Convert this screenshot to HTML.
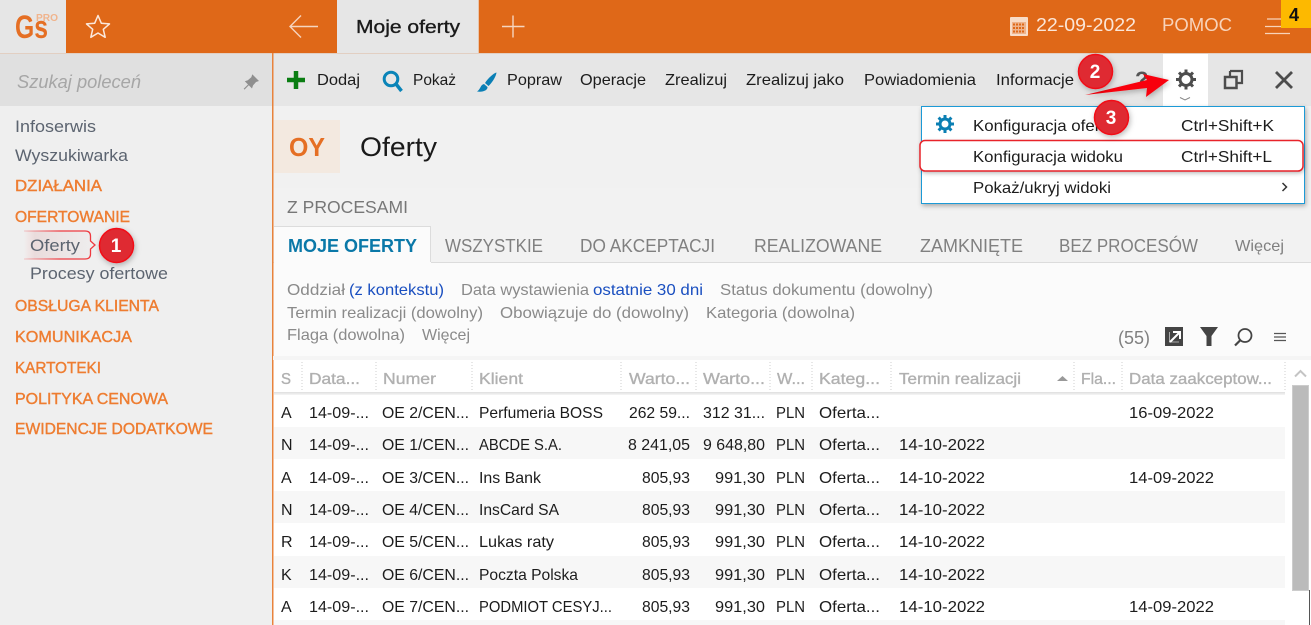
<!DOCTYPE html>
<html><head><meta charset="utf-8"><style>
html,body{margin:0;padding:0;width:1311px;height:625px;overflow:hidden;background:#fff}
svg{display:block}
text{font-family:"Liberation Sans",sans-serif;font-size:16px;fill:#1c1c1c}
.t{font-size:16px;fill:#1c1c1c}
.s{fill:#5c6470;font-size:16.5px}
.o{fill:#ee7d31;font-size:15.5px;stroke:#ee7d31;stroke-width:.4px}
.tab{fill:#808080;font-size:18px}
.f{fill:#8a8a8a;font-size:16px}
.b{fill:#1a4fc0;font-size:16px}
.h{fill:#b0b0b0;font-size:16px;stroke:#b0b0b0;stroke-width:.35px}
.bn{fill:#fff;font-weight:bold;font-size:19px;text-anchor:middle}
</style></head><body>
<svg width="1311" height="625" viewBox="0 0 1311 625" xmlns="http://www.w3.org/2000/svg">
<defs>
<filter id="sh" x="-30%" y="-30%" width="160%" height="160%"><feDropShadow dx="1" dy="2" stdDeviation="3" flood-color="#000" flood-opacity=".28"/></filter>
<filter id="sh2" x="-5%" y="-20%" width="110%" height="140%"><feDropShadow dx="1" dy="2" stdDeviation="2.5" flood-color="#000" flood-opacity=".3"/></filter>
<linearGradient id="fade" x1="0" x2="1"><stop offset="0" stop-color="#f3dada" stop-opacity="0"/><stop offset=".15" stop-color="#eadcdc"/><stop offset="1" stop-color="#eee"/></linearGradient>
<linearGradient id="fs" gradientUnits="userSpaceOnUse" x1="22" y1="0" x2="60" y2="0"><stop offset="0" stop-color="#ee3a40" stop-opacity=".15"/><stop offset="1" stop-color="#ee3a40"/></linearGradient>
<linearGradient id="hs" x1="0" x2="0" y1="0" y2="1"><stop offset="0" stop-color="#dedede"/><stop offset="1" stop-color="#f6f6f6"/></linearGradient>
</defs>
<!-- backgrounds -->
<rect width="1311" height="625" fill="#fbfbfb"/>
<rect y="0" width="1311" height="53" fill="#df6818"/>
<rect width="66" height="53" fill="#e6e6e6"/>
<rect x="337" width="141" height="53" fill="#e6e6e6"/>
<rect x="478" width="1" height="53" fill="#e8c4aa"/>
<rect y="53" width="272" height="572" fill="#efefef"/>
<rect y="53" width="272" height="53" fill="#e0e0e0"/>
<rect x="273" y="53" width="1038" height="53" fill="#e6e6e6"/>
<rect y="53" width="1311" height="1" fill="#e2cfc2"/>
<rect x="1163" y="54" width="45" height="52" fill="#fff"/>
<rect x="273" y="106" width="1038" height="82" fill="#f1f1f1"/>
<rect x="273" y="188" width="1038" height="38" fill="#f2f2f2"/>
<rect x="273" y="226" width="1038" height="36" fill="#f2f2f2"/>
<rect x="273" y="262" width="1038" height="1" fill="#dcdcdc"/>
<rect x="274" y="226" width="157" height="37" fill="#fbfbfb"/>
<path d="M274 226.500H430.500V262" fill="none" stroke="#dcdcdc"/>
<rect x="272" y="53" width="1.500" height="572" fill="#e8833c"/>
<!-- header -->
<text x="15" y="38" font-weight="bold" style="font-size:32px;fill:#e56f24" textLength="33" lengthAdjust="spacingAndGlyphs">Gs</text>
<text x="36" y="21" font-weight="bold" style="font-size:10.500px;fill:#f0b48d" textLength="22" lengthAdjust="spacingAndGlyphs">PRO</text>
<path d="M98 15.500l3.300 7.700 8.200.7-6.200 5.400 1.900 8-7.200-4.300-7.200 4.300 1.900-8-6.200-5.400 8.200-.7z" fill="none" stroke="#fbe8dc" stroke-width="1.500" stroke-linejoin="round"/>
<path d="M318 26.500H290M301 15.500L290 26.500L301 37.500" fill="none" stroke="#f6d5bf" stroke-width="1.400"/>
<text x="356" y="33" style="font-size:18.500px;fill:#1a1a1a;stroke:#1a1a1a;stroke-width:.35px" textLength="104" lengthAdjust="spacingAndGlyphs">Moje oferty</text>
<path d="M502 26.500H524.500M513 15.500V37.500" stroke="#f6d5bf" stroke-width="1.400"/>
<rect x="1010" y="17" width="18" height="19" rx="1" fill="#f8dcc8"/>
<rect x="1012" y="22" width="14" height="12" fill="#eeb38c"/>
<path d="M1013 23.500h2v2h-2zM1016 23.500h2v2h-2zM1019 23.500h2v2h-2zM1022 23.500h2v2h-2zM1013 27h2v2h-2zM1016 27h2v2h-2zM1019 27h2v2h-2zM1022 27h2v2h-2zM1013 30.500h2v2h-2zM1016 30.500h2v2h-2zM1019 30.500h2v2h-2zM1022 30.500h2v2h-2z" fill="#df6818"/>
<text x="1036" y="31" style="font-size:18px;fill:#fbe6d8" textLength="100" lengthAdjust="spacingAndGlyphs">22-09-2022</text>
<text x="1162" y="31" style="font-size:18px;fill:#f8d3ba" textLength="70" lengthAdjust="spacingAndGlyphs">POMOC</text>
<path d="M1267 19H1290M1265 26.500H1290M1265 33.500H1290" stroke="#f8d3ba" stroke-width="1.300"/>
<rect x="1281" y="0" width="30" height="28" fill="#fdb900"/>
<text x="1289" y="21" font-weight="bold" style="font-size:18px;fill:#111">4</text>
<!-- search -->
<text x="17" y="88" font-style="italic" style="font-size:18px;fill:#a6a6a6" textLength="124" lengthAdjust="spacingAndGlyphs">Szukaj poleceń</text>
<path d="M252 74l7 7-3 1-3 3.500-1 3-3.200-3.200-4.300 4.300-.8-.8 4.300-4.300-3.200-3.200 3-1 3.500-3 1-3z" fill="#8f8f8f"/>
<!-- sidebar -->
<text x="15" y="132" class="s" textLength="81" lengthAdjust="spacingAndGlyphs">Infoserwis</text>
<text x="15" y="161" class="s" textLength="113" lengthAdjust="spacingAndGlyphs">Wyszukiwarka</text>
<text x="15" y="191" class="o" textLength="87" lengthAdjust="spacingAndGlyphs">DZIAŁANIA</text>
<text x="15" y="222" class="o" textLength="115" lengthAdjust="spacingAndGlyphs">OFERTOWANIE</text>
<path d="M24 231H85Q90.500 231 90.500 236V241L95 245L90.500 249V254Q90.500 259 85 259H24Z" fill="url(#fade)"/>
<path d="M24 231H85Q90.500 231 90.500 236V241L95 245L90.500 249V254Q90.500 259 85 259H24" fill="none" stroke="url(#fs)" stroke-width="1.300"/>
<text x="30" y="251" class="s" textLength="50" lengthAdjust="spacingAndGlyphs">Oferty</text>
<text x="30" y="279" class="s" textLength="138" lengthAdjust="spacingAndGlyphs">Procesy ofertowe</text>
<text x="15" y="311" class="o" textLength="144" lengthAdjust="spacingAndGlyphs">OBSŁUGA KLIENTA</text>
<text x="15" y="342" class="o" textLength="117" lengthAdjust="spacingAndGlyphs">KOMUNIKACJA</text>
<text x="15" y="373" class="o" textLength="86" lengthAdjust="spacingAndGlyphs">KARTOTEKI</text>
<text x="15" y="404" class="o" textLength="153" lengthAdjust="spacingAndGlyphs">POLITYKA CENOWA</text>
<text x="15" y="434" class="o" textLength="198" lengthAdjust="spacingAndGlyphs">EWIDENCJE DODATKOWE</text>
<!-- toolbar -->
<path d="M287 80H305M296 71V89" stroke="#0a7d12" stroke-width="4.500"/>
<circle cx="391" cy="79" r="6.800" fill="none" stroke="#0a84b8" stroke-width="3"/>
<path d="M396 84L401.500 91" stroke="#0a84b8" stroke-width="3.500"/>
<path d="M496.500 72.500C494 73 488 78 485 83L488.500 86C491 84 496 77 496.500 72.500Z" fill="#0a7fb5"/>
<path d="M484 84C480 85 481 89 477 91.500C483 92.500 488 90 487.500 87Z" fill="#0a7fb5"/>
<text x="317" y="85" class="t" textLength="43" lengthAdjust="spacingAndGlyphs">Dodaj</text>
<text x="413" y="85" class="t" textLength="43" lengthAdjust="spacingAndGlyphs">Pokaż</text>
<text x="507" y="85" class="t" textLength="55" lengthAdjust="spacingAndGlyphs">Popraw</text>
<text x="580" y="85" class="t" textLength="66" lengthAdjust="spacingAndGlyphs">Operacje</text>
<text x="665" y="85" class="t" textLength="62" lengthAdjust="spacingAndGlyphs">Zrealizuj</text>
<text x="746" y="85" class="t" textLength="98" lengthAdjust="spacingAndGlyphs">Zrealizuj jako</text>
<text x="864" y="85" class="t" textLength="112" lengthAdjust="spacingAndGlyphs">Powiadomienia</text>
<text x="996" y="85" class="t" textLength="78" lengthAdjust="spacingAndGlyphs">Informacje</text>
<text x="1135" y="87" font-weight="bold" style="font-size:22px;fill:#555">?</text>
<!-- gear -->
<g fill="none" stroke="#4d4d4d">
<circle cx="1186" cy="79.500" r="6" stroke-width="3"/>
<path d="M1186 69.500V73M1186 86V89.500M1176 79.500H1179.500M1192.500 79.500H1196M1179 72.500L1181.300 74.800M1190.700 84.200L1193 86.500M1179 86.500L1181.300 84.200M1190.700 74.800L1193 72.500" stroke-width="3"/>
</g>
<path d="M1180 97.500L1185 100L1190 97.500" fill="none" stroke="#888"/>
<path d="M1230 71H1242V83H1236.500M1230 71V77" fill="none" stroke="#4d4d4d" stroke-width="2.200"/>
<rect x="1225" y="77" width="11.500" height="11" fill="none" stroke="#4d4d4d" stroke-width="2.500"/>
<path d="M1276 72L1292 88M1292 72L1276 88" stroke="#4d4d4d" stroke-width="2.800"/>
<!-- title -->
<rect x="274" y="120" width="66" height="53" fill="#f3e9e0"/>
<text x="289" y="156" font-weight="bold" style="font-size:26px;fill:#e56f24" textLength="36" lengthAdjust="spacingAndGlyphs">OY</text>
<text x="360" y="156" style="font-size:27px;fill:#1a1a1a" textLength="77" lengthAdjust="spacingAndGlyphs">Oferty</text>
<text x="287" y="213" style="font-size:17.500px;fill:#777" textLength="121" lengthAdjust="spacingAndGlyphs">Z PROCESAMI</text>
<!-- tabs -->
<text x="288" y="252" font-weight="bold" style="font-size:18px;fill:#0a78a8" textLength="129" lengthAdjust="spacingAndGlyphs">MOJE OFERTY</text>
<text x="445" y="252" class="tab" textLength="98" lengthAdjust="spacingAndGlyphs">WSZYSTKIE</text>
<text x="580" y="252" class="tab" textLength="135" lengthAdjust="spacingAndGlyphs">DO AKCEPTACJI</text>
<text x="754" y="252" class="tab" textLength="128" lengthAdjust="spacingAndGlyphs">REALIZOWANE</text>
<text x="920" y="252" class="tab" textLength="103" lengthAdjust="spacingAndGlyphs">ZAMKNIĘTE</text>
<text x="1059" y="252" class="tab" textLength="139" lengthAdjust="spacingAndGlyphs">BEZ PROCESÓW</text>
<text x="1235" y="251" style="font-size:16px;fill:#808080" textLength="49" lengthAdjust="spacingAndGlyphs">Więcej</text>
<!-- filters -->
<text x="287" y="295" class="f" textLength="58" lengthAdjust="spacingAndGlyphs">Oddział</text>
<text x="349" y="295" class="b" textLength="95" lengthAdjust="spacingAndGlyphs">(z kontekstu)</text>
<text x="461" y="295" class="f" textLength="128" lengthAdjust="spacingAndGlyphs">Data wystawienia</text>
<text x="593" y="295" class="b" textLength="110" lengthAdjust="spacingAndGlyphs">ostatnie 30 dni</text>
<text x="720" y="295" class="f" textLength="213" lengthAdjust="spacingAndGlyphs">Status dokumentu (dowolny)</text>
<text x="287" y="318" class="f" textLength="196" lengthAdjust="spacingAndGlyphs">Termin realizacji (dowolny)</text>
<text x="500" y="318" class="f" textLength="189" lengthAdjust="spacingAndGlyphs">Obowiązuje do (dowolny)</text>
<text x="706" y="318" class="f" textLength="149" lengthAdjust="spacingAndGlyphs">Kategoria (dowolna)</text>
<text x="287" y="340" class="f" textLength="118" lengthAdjust="spacingAndGlyphs">Flaga (dowolna)</text>
<text x="422" y="340" class="f" textLength="48" lengthAdjust="spacingAndGlyphs">Więcej</text>
<text x="1118" y="344" style="font-size:18px;fill:#808080" textLength="32" lengthAdjust="spacingAndGlyphs">(55)</text>
<rect x="1165" y="327" width="18" height="19" fill="#444"/>
<path d="M1169.500 332V342H1179" fill="none" stroke="#aaa" stroke-width="1"/>
<path d="M1170 342L1179 333M1173 332H1180V339" fill="none" stroke="#fff" stroke-width="2"/>
<path d="M1200 327H1218L1211.500 336V346H1206.500V336Z" fill="#444"/>
<circle cx="1245" cy="335.500" r="6.500" fill="none" stroke="#444" stroke-width="1.800"/>
<path d="M1240 340.500L1235 345.500" stroke="#444" stroke-width="2.200"/>
<path d="M1274 333.500H1286M1274 337H1286M1274 340.500H1286" stroke="#555" stroke-width="1.300"/>
<!-- table -->
<rect x="273" y="356" width="1038" height="4" fill="#f5f5f5"/>
<rect x="273.500" y="360" width="1037.500" height="265" fill="#fff"/>
<rect x="274" y="392" width="1011" height="3" fill="url(#hs)"/>
<g stroke="#cfcfcf" stroke-dasharray="1 2">
<path d="M302 362V392M376 362V392M472 362V392M621 362V392M696 362V392M770 362V392M812 362V392M891 362V392M1074 362V392M1122 362V392M1285 362V392"/>
</g>
<text x="281" y="384" class="h" textLength="10" lengthAdjust="spacingAndGlyphs">S</text>
<text x="309" y="384" class="h" textLength="51" lengthAdjust="spacingAndGlyphs">Data...</text>
<text x="383" y="384" class="h" textLength="53" lengthAdjust="spacingAndGlyphs">Numer</text>
<text x="479" y="384" class="h" textLength="44" lengthAdjust="spacingAndGlyphs">Klient</text>
<text x="629" y="384" class="h" textLength="61" lengthAdjust="spacingAndGlyphs">Warto...</text>
<text x="703" y="384" class="h" textLength="62" lengthAdjust="spacingAndGlyphs">Warto...</text>
<text x="777" y="384" class="h" textLength="28" lengthAdjust="spacingAndGlyphs">W...</text>
<text x="819" y="384" class="h" textLength="61" lengthAdjust="spacingAndGlyphs">Kateg...</text>
<text x="899" y="384" class="h" textLength="122" lengthAdjust="spacingAndGlyphs">Termin realizacji</text>
<path d="M1057 381L1062.500 376L1068 381Z" fill="#999"/>
<text x="1081" y="384" class="h" textLength="35" lengthAdjust="spacingAndGlyphs">Fla...</text>
<text x="1129" y="384" class="h" textLength="143" lengthAdjust="spacingAndGlyphs">Data zaakceptow...</text>
<rect x="274" y="427" width="1011" height="32" fill="#f7f7f7"/>
<rect x="274" y="491" width="1011" height="32" fill="#f7f7f7"/>
<rect x="274" y="556" width="1011" height="32" fill="#f7f7f7"/>
<rect x="274" y="620" width="1011" height="5" fill="#f7f7f7"/>
<!-- row 1 -->
<text x="281" y="418">A</text><text x="309" y="418" textLength="60" lengthAdjust="spacingAndGlyphs">14-09-...</text><text x="382" y="418" textLength="87" lengthAdjust="spacingAndGlyphs">OE 2/CEN...</text><text x="479" y="418" textLength="124" lengthAdjust="spacingAndGlyphs">Perfumeria BOSS</text><text x="629" y="418" textLength="61" lengthAdjust="spacingAndGlyphs">262 59...</text><text x="703" y="418" textLength="62" lengthAdjust="spacingAndGlyphs">312 31...</text><text x="776" y="418" textLength="29" lengthAdjust="spacingAndGlyphs">PLN</text><text x="819" y="418" textLength="61" lengthAdjust="spacingAndGlyphs">Oferta...</text><text x="1129" y="418" textLength="85" lengthAdjust="spacingAndGlyphs">16-09-2022</text>
<!-- row 2 -->
<text x="281" y="450">N</text><text x="309" y="450" textLength="60" lengthAdjust="spacingAndGlyphs">14-09-...</text><text x="382" y="450" textLength="87" lengthAdjust="spacingAndGlyphs">OE 1/CEN...</text><text x="479" y="450" textLength="83" lengthAdjust="spacingAndGlyphs">ABCDE S.A.</text><text x="628" y="450" textLength="62" lengthAdjust="spacingAndGlyphs">8 241,05</text><text x="703" y="450" textLength="62" lengthAdjust="spacingAndGlyphs">9 648,80</text><text x="776" y="450" textLength="29" lengthAdjust="spacingAndGlyphs">PLN</text><text x="819" y="450" textLength="61" lengthAdjust="spacingAndGlyphs">Oferta...</text><text x="899" y="450" textLength="86" lengthAdjust="spacingAndGlyphs">14-10-2022</text>
<!-- row 3 -->
<text x="281" y="483">A</text><text x="309" y="483" textLength="60" lengthAdjust="spacingAndGlyphs">14-09-...</text><text x="382" y="483" textLength="87" lengthAdjust="spacingAndGlyphs">OE 3/CEN...</text><text x="479" y="483" textLength="62" lengthAdjust="spacingAndGlyphs">Ins Bank</text><text x="642" y="483" textLength="48" lengthAdjust="spacingAndGlyphs">805,93</text><text x="715" y="483" textLength="50" lengthAdjust="spacingAndGlyphs">991,30</text><text x="776" y="483" textLength="29" lengthAdjust="spacingAndGlyphs">PLN</text><text x="819" y="483" textLength="61" lengthAdjust="spacingAndGlyphs">Oferta...</text><text x="899" y="483" textLength="86" lengthAdjust="spacingAndGlyphs">14-10-2022</text><text x="1129" y="483" textLength="85" lengthAdjust="spacingAndGlyphs">14-09-2022</text>
<!-- row 4 -->
<text x="281" y="515">N</text><text x="309" y="515" textLength="60" lengthAdjust="spacingAndGlyphs">14-09-...</text><text x="382" y="515" textLength="87" lengthAdjust="spacingAndGlyphs">OE 4/CEN...</text><text x="479" y="515" textLength="80" lengthAdjust="spacingAndGlyphs">InsCard SA</text><text x="642" y="515" textLength="48" lengthAdjust="spacingAndGlyphs">805,93</text><text x="715" y="515" textLength="50" lengthAdjust="spacingAndGlyphs">991,30</text><text x="776" y="515" textLength="29" lengthAdjust="spacingAndGlyphs">PLN</text><text x="819" y="515" textLength="61" lengthAdjust="spacingAndGlyphs">Oferta...</text><text x="899" y="515" textLength="86" lengthAdjust="spacingAndGlyphs">14-10-2022</text>
<!-- row 5 -->
<text x="281" y="547">R</text><text x="309" y="547" textLength="60" lengthAdjust="spacingAndGlyphs">14-09-...</text><text x="382" y="547" textLength="87" lengthAdjust="spacingAndGlyphs">OE 5/CEN...</text><text x="479" y="547" textLength="75" lengthAdjust="spacingAndGlyphs">Lukas raty</text><text x="642" y="547" textLength="48" lengthAdjust="spacingAndGlyphs">805,93</text><text x="715" y="547" textLength="50" lengthAdjust="spacingAndGlyphs">991,30</text><text x="776" y="547" textLength="29" lengthAdjust="spacingAndGlyphs">PLN</text><text x="819" y="547" textLength="61" lengthAdjust="spacingAndGlyphs">Oferta...</text><text x="899" y="547" textLength="86" lengthAdjust="spacingAndGlyphs">14-10-2022</text>
<!-- row 6 -->
<text x="281" y="580">K</text><text x="309" y="580" textLength="60" lengthAdjust="spacingAndGlyphs">14-09-...</text><text x="382" y="580" textLength="87" lengthAdjust="spacingAndGlyphs">OE 6/CEN...</text><text x="479" y="580" textLength="99" lengthAdjust="spacingAndGlyphs">Poczta Polska</text><text x="642" y="580" textLength="48" lengthAdjust="spacingAndGlyphs">805,93</text><text x="715" y="580" textLength="50" lengthAdjust="spacingAndGlyphs">991,30</text><text x="776" y="580" textLength="29" lengthAdjust="spacingAndGlyphs">PLN</text><text x="819" y="580" textLength="61" lengthAdjust="spacingAndGlyphs">Oferta...</text><text x="899" y="580" textLength="86" lengthAdjust="spacingAndGlyphs">14-10-2022</text>
<!-- row 7 -->
<text x="281" y="612">A</text><text x="309" y="612" textLength="60" lengthAdjust="spacingAndGlyphs">14-09-...</text><text x="382" y="612" textLength="87" lengthAdjust="spacingAndGlyphs">OE 7/CEN...</text><text x="479" y="612" textLength="133" lengthAdjust="spacingAndGlyphs">PODMIOT CESYJ...</text><text x="642" y="612" textLength="48" lengthAdjust="spacingAndGlyphs">805,93</text><text x="715" y="612" textLength="50" lengthAdjust="spacingAndGlyphs">991,30</text><text x="776" y="612" textLength="29" lengthAdjust="spacingAndGlyphs">PLN</text><text x="819" y="612" textLength="61" lengthAdjust="spacingAndGlyphs">Oferta...</text><text x="899" y="612" textLength="86" lengthAdjust="spacingAndGlyphs">14-10-2022</text><text x="1129" y="612" textLength="85" lengthAdjust="spacingAndGlyphs">14-09-2022</text>
<!-- scrollbar -->
<path d="M1295 376.500L1300.500 371L1306 376.500" fill="none" stroke="#c4c4c4" stroke-width="2"/>
<rect x="1292.500" y="385.500" width="16" height="205" fill="#bbb" stroke="#ccc"/>
<rect x="1309" y="590" width="1" height="35" fill="#555"/>
<!-- popup -->
<rect x="921.500" y="106.500" width="383" height="97" fill="#fff" stroke="#1b9ad6" filter="url(#sh2)"/>
<g fill="none" stroke="#0b7fb3">
<circle cx="945" cy="124" r="5" stroke-width="3"/>
<path d="M945 115V118M945 130V133M936 124H939M951 124H954M938.600 117.600L940.800 119.800M949.200 128.200L951.400 130.400M938.600 130.400L940.800 128.200M949.200 119.800L951.400 117.600" stroke-width="3"/>
</g>
<text x="973" y="131" class="t" textLength="132" lengthAdjust="spacingAndGlyphs">Konfiguracja ofert</text>
<text x="1181" y="131" class="t" textLength="93" lengthAdjust="spacingAndGlyphs">Ctrl+Shift+K</text>
<rect x="920" y="140.500" width="383" height="30.500" rx="5" fill="#fff" filter="url(#sh2)"/>
<rect x="920" y="140.500" width="383" height="30.500" rx="5" fill="none" stroke="#e8232a" stroke-width="1.500"/>
<text x="973" y="162" class="t" textLength="150" lengthAdjust="spacingAndGlyphs">Konfiguracja widoku</text>
<text x="1181" y="162" class="t" textLength="91" lengthAdjust="spacingAndGlyphs">Ctrl+Shift+L</text>
<text x="973" y="193" class="t" textLength="138" lengthAdjust="spacingAndGlyphs">Pokaż/ukryj widoki</text>
<path d="M1282.500 183L1286.500 187L1282.500 191" fill="none" stroke="#333" stroke-width="1.500"/>
<!-- arrow -->
<path d="M1085 95L1147 80L1143 74L1169 80L1146 97L1147 88Z" fill="#f8000c" filter="url(#sh)"/>
<!-- badges -->
<g filter="url(#sh)">
<circle cx="116.500" cy="245.500" r="17" fill="#df2a33" stroke="#f20d17" stroke-width="1.500"/>
<circle cx="1095.500" cy="71.500" r="17" fill="#df2a33" stroke="#f20d17" stroke-width="1.500"/>
<circle cx="1111.500" cy="117.500" r="17" fill="#df2a33" stroke="#f20d17" stroke-width="1.500"/>
</g>
<text x="116" y="252" class="bn">1</text>
<text x="1095" y="78" class="bn">2</text>
<text x="1111" y="124" class="bn">3</text>
</svg>
</body></html>
